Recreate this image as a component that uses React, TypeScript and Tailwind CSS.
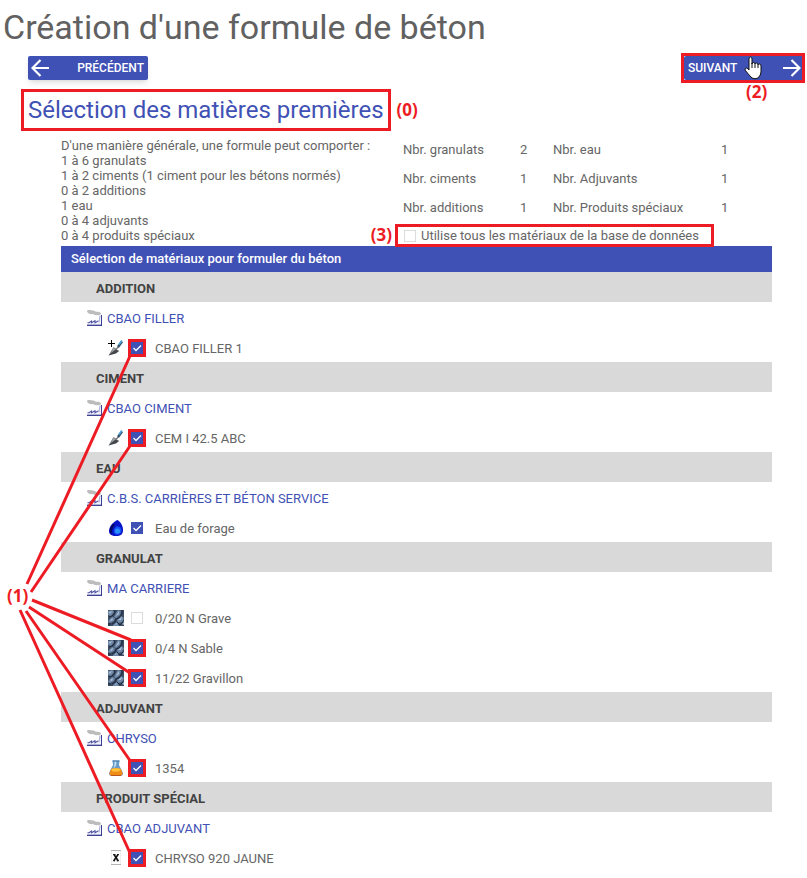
import React from 'react';

type IconName = 'filler' | 'cement' | 'water' | 'stone' | 'flask' | 'special';

interface Material {
  name: string;
  icon: IconName;
  checked: boolean;
  marked: boolean;
}

interface Group {
  title: string;
  supplier: string;
  materials: Material[];
}

const groups: Group[] = [
  {
    title: 'ADDITION',
    supplier: 'CBAO FILLER',
    materials: [{ name: 'CBAO FILLER 1', icon: 'filler', checked: true, marked: true }]
  },
  {
    title: 'CIMENT',
    supplier: 'CBAO CIMENT',
    materials: [{ name: 'CEM I 42.5 ABC', icon: 'cement', checked: true, marked: true }]
  },
  {
    title: 'EAU',
    supplier: 'C.B.S. CARRIÈRES ET BÉTON SERVICE',
    materials: [{ name: 'Eau de forage', icon: 'water', checked: true, marked: false }]
  },
  {
    title: 'GRANULAT',
    supplier: 'MA CARRIERE',
    materials: [
      { name: '0/20 N Grave', icon: 'stone', checked: false, marked: false },
      { name: '0/4 N Sable', icon: 'stone', checked: true, marked: true },
      { name: '11/22 Gravillon', icon: 'stone', checked: true, marked: true }
    ]
  },
  {
    title: 'ADJUVANT',
    supplier: 'CHRYSO',
    materials: [{ name: '1354', icon: 'flask', checked: true, marked: true }]
  },
  {
    title: 'PRODUIT SPÉCIAL',
    supplier: 'CBAO ADJUVANT',
    materials: [{ name: 'CHRYSO 920 JAUNE', icon: 'special', checked: true, marked: true }]
  }
];

const rules = [
  "D'une manière générale, une formule peut comporter :",
  '1 à 6 granulats',
  '1 à 2 ciments (1 ciment pour les bétons normés)',
  '0 à 2 additions',
  '1 eau',
  '0 à 4 adjuvants',
  '0 à 4 produits spéciaux'
];

const counts = [
  ['Nbr. granulats', '2', 'Nbr. eau', '1'],
  ['Nbr. ciments', '1', 'Nbr. Adjuvants', '1'],
  ['Nbr. additions', '1', 'Nbr. Produits spéciaux', '1']
];

function FactoryIcon() {
  return (
    <svg viewBox="0 0 16 16" className="w-4 h-4 shrink-0" aria-hidden="true">
      <path d="M0 1.500C0 0 2 -.2 4 .3C6 0 8 1 9 2C11 1.500 13.500 2 14 3.500C14 5 12 5.500 10.500 5C9 5.500 7 5 6 4C3.500 4.500 .5 3.500 0 1.500Z" fill="#bcbcbc" />
      <path d="M1 15V13L4.500 11V13L8 10.500V12.500L11.500 10.500V13H12.500L13 6H14.500V15Z" fill="#f2f3fb" />
      <path d="M.5 12.700H2L4.500 11V12.700L8 10.700V12.700L11.500 10.700" fill="none" stroke="#5256a5" strokeWidth="1.100" />
      <path d="M12 12.500L13 5.500" fill="none" stroke="#a9abd2" />
      <path d="M14.500 5V15.500" fill="none" stroke="#3b3f98" />
      <path d="M0 15.300H15" fill="none" stroke="#34388f" strokeWidth="1.300" />
    </svg>
  );
}

function Trowel() {
  return (
    <>
      <path d="M.5 15.500L5.500 7L11 11Z" fill="#7b8084" />
      <path d="M.5 15.500L7 9.500L11 11L8 13.500Z" fill="#44474c" />
      <path d="M3.500 12.500L5.500 8L7.500 9.500Z" fill="#a2a7aa" />
      <path d="M7.500 9.500L10.500 7" stroke="#777" strokeWidth="1.500" />
      <path d="M10 7L14 1.500" stroke="#34536a" strokeWidth="2.500" />
      <path d="M11 4.500L14 .5" stroke="#4aa5df" strokeWidth="1.500" />
    </>
  );
}

function MaterialIcon({ name }: { name: IconName }) {
  return (
    <svg viewBox="0 0 16 16" className="w-4 h-4 shrink-0" aria-hidden="true">
      {name === 'filler' && (
        <>
          <Trowel />
          <path d="M0 3.500H7M3.500 0V7" stroke="#000" />
        </>
      )}
      {name === 'cement' && <Trowel />}
      {name === 'water' && (
        <>
          <path d="M9.500 0C5 2 1 6.500 1 11C1 14.500 3.500 16 8 16C12.500 16 15 14.500 15 10C15 5.500 12.500 2 9.500 0Z" fill="#0713c8" />
          <path d="M5 4C1.500 7.500 .8 12 3.500 14.500C3.500 10 4.500 8 7 4.500Z" fill="#04075e" />
          <path d="M9 6C5 8 4.500 13.500 8 14.700C13 15.500 15 11 12.500 7.500Z" fill="#1450f4" />
          <circle cx="9.500" cy="11" r="2.500" fill="#2a92ff" />
        </>
      )}
      {name === 'stone' && (
        <>
          <path d="M0 0H16V16H0Z" fill="#3d4d66" />
          <path d="M0 1L5 0L6 2L3 6L0 5ZM8 3L10 0L13 1L12 5L8 8L6 7ZM1 10L4 7L7 8L6 11L2 13L0 12ZM9 10L13 6L16 8L14 12L10 13ZM5 15L9 12L11 16H5Z" fill="#7089a8" />
          <path d="M1 2L4 1L2 4ZM9 4L11 1L11 4L8 6ZM2 10L5 8L4 11ZM10 10L14 7L13 10ZM14 14L16 12V15ZM7 14L9 13L8 15Z" fill="#abc0d5" />
          <path d="M6 0L7 3L4 6L1 7M14 0L14 4L11 8L8 9L7 12L4 14M0 14L3 14M9 12L12 15L15 12" fill="none" stroke="#1c283c" />
        </>
      )}
      {name === 'flask' && (
        <>
          <path d="M4.500 .5H11.500L11 5L15 13Q15 16 12.500 16H3.500Q1 16 1 13L5 5Z" fill="#6a9bc6" />
          <path d="M6.500 1.500H8.500L8 5.500L5.500 8.500L6.500 5Z" fill="#cde4f5" />
          <path d="M3 9Q8 7 13 9L14.500 13Q14.500 15.800 12.500 15.800H3.500Q1.500 15.800 1.500 13Z" fill="#f08c18" />
          <path d="M3.300 9Q8 7.500 12.700 9L11 11.500H4.500Z" fill="#ffc43a" />
          <path d="M4.500 1H11.500" stroke="#3f76a6" />
          <path d="M3 15.500H13" stroke="#b9571c" />
        </>
      )}
      {name === 'special' && (
        <>
          <path d="M3 .5H13M3 14.500H13" stroke="#b5b5b5" />
          <path d="M3.500 1V14M12.500 1V14" stroke="#eeeeee" />
          <path d="M6 4.500L10.300 11M10 4.500L5.700 11" fill="none" stroke="#111" strokeWidth="1.600" />
          <path d="M5 4.500H7.500M9 4.500H11M5 10.700H7M8.700 10.700H11" stroke="#222" />
        </>
      )}
    </svg>
  );
}

function CheckBox({ id, checked, marked = false }: { id: string; checked: boolean; marked?: boolean }) {
  return (
    <span className={marked ? 'grid w-3 h-3 shrink-0 ring-3 ring-[#ed1c24]' : 'grid w-3 h-3 shrink-0'}>
      <input
        id={id}
        type="checkbox"
        defaultChecked={checked}
        className="peer col-start-1 row-start-1 appearance-none w-3 h-3 bg-white border border-[#dcdcdc] checked:bg-[#3f51b5] checked:border-[#3f51b5]"
      />
      <svg viewBox="0 0 12 12" className="col-start-1 row-start-1 w-3 h-3 pointer-events-none invisible peer-checked:visible" aria-hidden="true">
        <path d="M2.500 6L5 8.500L10 3.500" fill="none" stroke="#fff" strokeWidth="1.300" />
      </svg>
    </span>
  );
}

function HandCursor() {
  return (
    <svg viewBox="0 0 18 24" className="absolute left-[60px] top-0 w-[18px] h-6" aria-hidden="true">
      <path
        d="M5 14V3Q5 1 6.500 1Q8 1 8 3V8Q8 6.500 9.500 6.500Q11 6.500 11 8Q11.500 7 12.500 7Q14 7 14 9Q14.500 8 15.500 8Q17 8 17 10V16Q17 19 14 22Q11 23.500 8 22Q4 18 1 14Q1 12 2.500 12Q4 12.500 5 14Z"
        fill="#fff"
        stroke="#111"
      />
      <path d="M8 7V12M11 8V12M14 9V12" stroke="#111" />
    </svg>
  );
}

// Red guide lines going from label (1) to the checked materials
function Guides() {
  return (
    <svg viewBox="0 0 150 878" className="absolute left-0 top-0 w-[150px] h-[878px] pointer-events-none" aria-hidden="true">
      <path
        d="M130 356L27 584M130 446L31 592M32 600L131 640M29 607L130 673M26 611L131 762M20 610L130 853"
        fill="none"
        stroke="#ed1c24"
        strokeWidth="3"
      />
    </svg>
  );
}

const noteClass = "absolute font-['Open_Sans',sans-serif] font-bold text-[17px] leading-5 text-[#ed1c24]";

export default function App() {
  return (
    <div className="relative bg-white pb-1 font-[Roboto,sans-serif] text-[13px] leading-[15px] text-[#666666]">
      <h1 className="px-[3px] pt-[5px] pb-[7px] text-[34px] leading-11 text-[#616161]">Création d'une formule de béton</h1>

      <div className="flex justify-between pl-7 pr-[3px]">
        <button className="flex items-center justify-between w-30 h-6 pl-[3px] pr-1 rounded-xs bg-[#3f51b5] text-white text-xs font-medium shadow-md cursor-pointer">
          <svg viewBox="0 0 18 18" className="w-[18px] h-[18px]" fill="none" stroke="currentColor" strokeWidth="2.200" aria-hidden="true">
            <path d="M18 9H1.500M9.500 1L1.500 9L9.500 17" />
          </svg>
          PRÉCÉDENT
        </button>

        <div className="relative">
          <button className="flex items-center justify-between w-30 h-6 pl-1 pr-[3px] rounded-xs bg-[#3f51b5] text-white text-xs font-medium cursor-pointer">
            SUIVANT
            <svg viewBox="0 0 18 18" className="w-[18px] h-[18px]" fill="none" stroke="currentColor" strokeWidth="2.200" aria-hidden="true">
              <path d="M0 9H16.500M8.500 1L16.500 9L8.500 17" />
            </svg>
          </button>
          <HandCursor />
          <span className="absolute -inset-y-[3px] -left-[3px] -right-px border-3 border-[#ed1c24] pointer-events-none" />
          <span className={`${noteClass} left-[62px] top-[26px]`}>(2)</span>
        </div>
      </div>

      <div className="flex pl-[21px] pt-[9px]">
        <div className="relative">
          <h2 className="border-3 border-[#ed1c24] px-1 h-[42px] text-2xl leading-9 text-[#3f51b5]">
            Sélection des matières premières
          </h2>
          <span className={`${noteClass} left-full ml-[6px] top-[11px]`}>(0)</span>
        </div>
      </div>

      <main className="pl-[61px] pr-[35px] pt-[7px]">
        <div className="flex">
          <div className="w-[342px] shrink-0">
            {rules.map((rule) => (
              <p key={rule}>{rule}</p>
            ))}
          </div>

          <div className="-mt-[3px]">
            <table>
              <tbody>
                {counts.map((row) => (
                  <tr key={row[0]} className="h-[29px]">
                    <th scope="row" className="w-[117px] text-left font-normal">{row[0]}</th>
                    <td className="w-[33px]">{row[1]}</td>
                    <th scope="row" className="w-[168px] text-left font-normal">{row[2]}</th>
                    <td>{row[3]}</td>
                  </tr>
                ))}
              </tbody>
            </table>
            <div className="relative -ml-2 mt-[2px] -mb-px h-[23px] border-3 border-[#ed1c24] flex items-center gap-[5px] pl-[6px] w-[319px]">
              <CheckBox id="all_materials" checked={false} />
              <label htmlFor="all_materials">Utilise tous les matériaux de la base de données</label>
              <span className={`${noteClass} right-full mr-[6px] -top-[2px]`}>(3)</span>
            </div>
          </div>
        </div>

        <section>
          <h3 className="h-[26px] px-[10px] leading-[26px] bg-[#3f51b5] text-white font-medium">
            Sélection de matériaux pour formuler du béton
          </h3>
          {groups.map((group) => (
            <div key={group.title}>
              <h4 className="h-[30px] pl-[35px] pt-[3px] leading-7 bg-[#d9d9d9] text-[#424242] font-bold">{group.title}</h4>
              <div className="flex items-center gap-1 h-[30px] pl-[26px] pt-[2px]">
                <FactoryIcon />
                <a href="#" className="text-[#3f51b5]">{group.supplier}</a>
              </div>
              {group.materials.map((material) => (
                <div key={material.name} className="flex items-center h-[30px] pl-[47px] pt-[2px]">
                  <MaterialIcon name={material.icon} />
                  <span className="ml-[7px] mr-3 flex">
                    <CheckBox id={material.name} checked={material.checked} marked={material.marked} />
                  </span>
                  <label htmlFor={material.name}>{material.name}</label>
                </div>
              ))}
            </div>
          ))}
        </section>
      </main>

      <Guides />
      <span className={`${noteClass} left-[7px] top-[586px]`}>(1)</span>
    </div>
  );
}
